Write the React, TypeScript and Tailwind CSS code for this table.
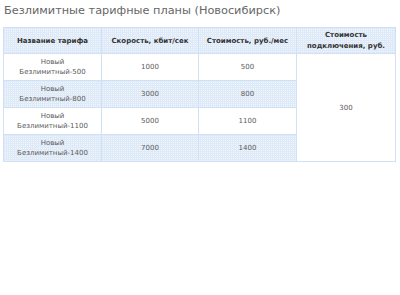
import React from "react";

const rows = [
  { name: "Безлимитный-500", speed: "1000", price: "500" },
  { name: "Безлимитный-800", speed: "3000", price: "800" },
  { name: "Безлимитный-1100", speed: "5000", price: "1100" },
  { name: "Безлимитный-1400", speed: "7000", price: "1400" },
];

const grid =
  "bg-[#eef5fc] bg-[linear-gradient(90deg,#dfeaf8_1px,transparent_1px),linear-gradient(#dfeaf8_1px,transparent_1px)] bg-[length:2px_2px]";

export default function App() {
  return (
    <div className="w-[400px] h-[295px] bg-white px-[3px] pt-[3px] font-['DejaVu_Sans',Verdana,sans-serif]">
      {/* Title */}
      <h1 className="text-[11.3px] leading-[16px] text-[#666] pl-[1px] mb-[8px]">
        Безлимитные тарифные планы (Новосибирск)
      </h1>

      {/* Tariffs */}
      <table className="w-[392px] border-collapse table-fixed text-[7px] leading-[10px] text-center">
        <thead>
          <tr className={`h-[26px] ${grid}`}>
            <th className="w-[98px] border border-[#cfe1f4] font-bold text-[#333]">Название тарифа</th>
            <th className="w-[97px] border border-[#cfe1f4] font-bold text-[#333]">Скорость, кбит/сек</th>
            <th className="w-[98px] border border-[#cfe1f4] font-bold text-[#333]">Стоимость, руб./мес</th>
            <th className="w-[99px] border border-[#cfe1f4] font-bold text-[#333] leading-[11px]">
              Стоимость
              <br />
              подключения, руб.
            </th>
          </tr>
        </thead>
        <tbody className="text-[#5a5a5a]">
          {rows.map((r, i) => (
            <tr key={r.name} className={`h-[27px] ${i % 2 === 1 ? grid : "bg-white"}`}>
              <td className="border border-[#cfe1f4]">
                Новый
                <br />
                {r.name}
              </td>
              <td className="border border-[#cfe1f4]">{r.speed}</td>
              <td className="border border-[#cfe1f4]">{r.price}</td>
              {i === 0 && (
                <td rowSpan={4} className="border border-[#cfe1f4] bg-white">
                  300
                </td>
              )}
            </tr>
          ))}
        </tbody>
      </table>
    </div>
  );
}
